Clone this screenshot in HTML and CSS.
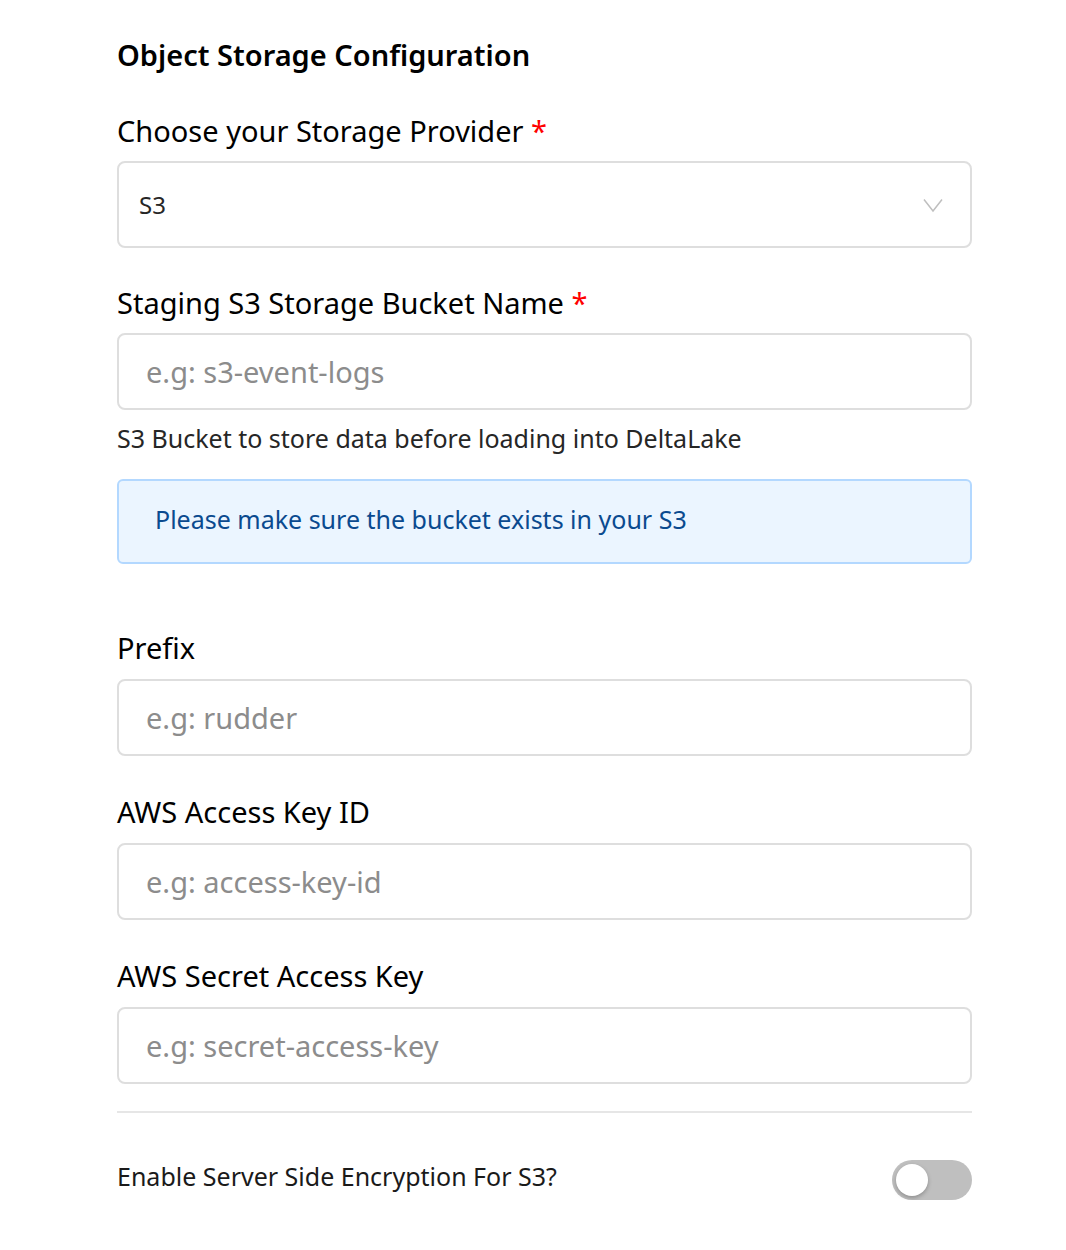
FILE: index.html
```
<!DOCTYPE html>
<html lang="en">
<head>
<meta charset="utf-8">
<title>Object Storage Configuration</title>
<link rel="stylesheet" href="styles.css">
</head>
<body>
<div class="form">
  <h2 class="title">Object Storage Configuration</h2>

  <div class="label first">Choose your Storage Provider <span class="req">*</span></div>
  <div class="select">
    <span class="select-value">S3</span>
    <svg class="chevron" width="20" height="15" viewBox="0 0 20 15"><path d="M1 1.5 L10 13 L19 1.5" fill="none" stroke="#bfbfbf" stroke-width="1.5"/></svg>
  </div>

  <div class="label second">Staging S3 Storage Bucket Name <span class="req">*</span></div>
  <div class="input"><span class="ph">e.g: s3-event-logs</span></div>
  <div class="helper">S3 Bucket to store data before loading into DeltaLake</div>
  <div class="alert">Please make sure the bucket exists in your S3</div>

  <div class="label prefix">Prefix</div>
  <div class="input"><span class="ph">e.g: rudder</span></div>

  <div class="label">AWS Access Key ID</div>
  <div class="input"><span class="ph">e.g: access-key-id</span></div>

  <div class="label">AWS Secret Access Key</div>
  <div class="input"><span class="ph">e.g: secret-access-key</span></div>

  <div class="divider"></div>

  <div class="toggle-row">
    <span class="toggle-label">Enable Server Side Encryption For S3?</span>
    <span class="switch"><span class="knob"></span></span>
  </div>
</div>
</body>
</html>
```
FILE: styles.css
```
* { box-sizing: border-box; }
body {
  margin: 0;
  background: #fff;
  font-family: "Noto Sans", "Open Sans", sans-serif;
  color: #000;
}
.form {
  width: 855px;
  margin-left: 117px;
  padding-top: 35px;
  display: flex;
  flex-direction: column;
}
.title {
  margin: 0;
  font-size: 29px;
  font-weight: 600;
  line-height: 40px;
  height: 40px;
}
.label {
  font-size: 29px;
  line-height: 40px;
  height: 40px;
  margin-top: 36px;
  margin-bottom: 11px;
  color: #000;
}
.label.first { margin-top: 36px; margin-bottom: 10px; }
.label.second { margin-top: 35px; margin-bottom: 10px; }
.label.prefix { margin-top: 64px; margin-bottom: 11px; }
.req { color: #f00; }
.select {
  height: 87px;
  border: 2px solid #dedede;
  border-radius: 8px;
  display: flex;
  align-items: center;
  justify-content: space-between;
  padding: 0 27px 0 20px;
}
.select-value { font-size: 24px; color: #262626; }
.chevron { display: block; margin-top: 2px; }
.input {
  height: 77px;
  border: 2px solid #dedede;
  border-radius: 8px;
  display: flex;
  align-items: center;
  padding-left: 27px;
}
.ph { font-size: 29px; color: #8c8c8c; }
.helper {
  margin-top: 13px;
  font-size: 25px;
  line-height: 30px;
  color: #262626;
}
.alert {
  margin-top: 26px;
  height: 85px;
  background: #ebf5ff;
  border: 2px solid #b3d8ff;
  border-radius: 6px;
  display: flex;
  align-items: center;
  padding: 0 0 6px 36px;
  font-size: 25px;
  color: #0a4a8f;
}
.divider {
  margin-top: 27px;
  height: 2px;
  background: #e6e6e6;
}
.toggle-row {
  margin-top: 46px;
  display: flex;
  align-items: center;
  justify-content: space-between;
}
.toggle-label { font-size: 25px; line-height: 34px; color: #1a1a1a; margin-bottom: 7px; }
.switch {
  width: 80px;
  height: 40px;
  border-radius: 20px;
  background: #bfbfbf;
  position: relative;
  display: block;
}
.knob {
  position: absolute;
  left: 4px;
  top: 4px;
  width: 32px;
  height: 32px;
  border-radius: 50%;
  background: #fff;
  box-shadow: 0 2px 4px rgba(0,0,0,0.25);
}
```
